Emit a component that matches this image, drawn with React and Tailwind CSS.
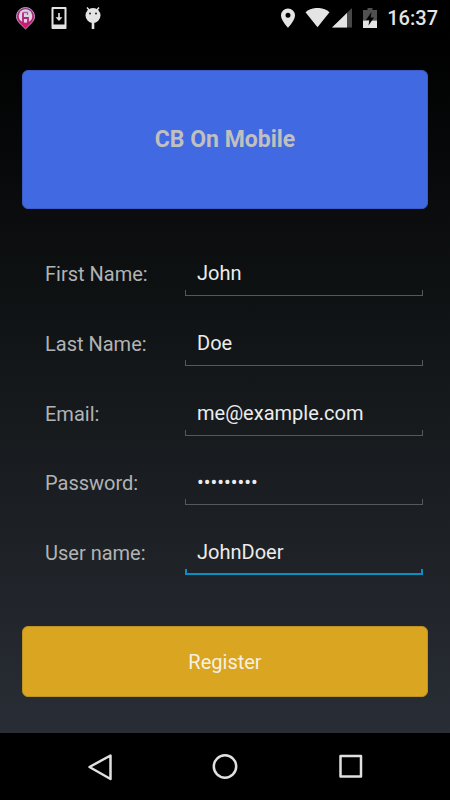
import { useState } from 'react';

const FIELDS = [
  { id: 'firstName', label: 'First Name:', type: 'text' },
  { id: 'lastName', label: 'Last Name:', type: 'text' },
  { id: 'email', label: 'Email:', type: 'email' },
  { id: 'password', label: 'Password:', type: 'password' },
  { id: 'userName', label: 'User name:', type: 'text' },
];

function StatusBar() {
  return (
    <header className="flex h-9 shrink-0 items-center justify-between bg-black pl-[15px] pr-3 text-[#e4e4e4]">
      <div className="flex items-center gap-[13px]">
        <svg className="h-6 w-[22px]" viewBox="0 0 22 24" aria-hidden="true">
          <defs>
            <linearGradient id="pin" x1="0" y1="0" x2="0" y2="1">
              <stop offset="0" stopColor="#93308f" />
              <stop offset="1" stopColor="#e0126e" />
            </linearGradient>
          </defs>
          <path d="M10.500 1.500a9 9 0 0 1 9 9c0 4.500-4.500 8-9 12.500-4.500-4.500-9-8-9-12.500a9 9 0 0 1 9-9Z" fill="url(#pin)" stroke="#b9a3b4" strokeWidth="1" />
          <circle cx="10.500" cy="10" r="6.800" fill="#ddd3dc" />
          <path d="M8 6.500V18M8 12h5v6.500" fill="none" stroke="#b0247f" strokeWidth="1.800" />
          <path d="M8 6.500h4.500V9" fill="none" stroke="#a9619f" strokeWidth="1.300" />
        </svg>
        <svg className="h-6 w-[18px]" viewBox="0 0 18 24" aria-hidden="true">
          <path fillRule="evenodd" d="M2.500 1h13a1 1 0 0 1 1 1v20a1 1 0 0 1-1 1h-13a1 1 0 0 1-1-1V2a1 1 0 0 1 1-1Zm1 2v15.500h11V3Z" fill="currentColor" />
          <path d="M8.200 7h1.600v4.300h2.700L9 15l-3.500-3.700h2.700Z" fill="currentColor" />
        </svg>
        <svg className="ml-[3px] h-6 w-[18px]" viewBox="0 0 18 24" aria-hidden="true">
          <path d="m3 1.500 3 3.500M15 1.500 12 5" stroke="currentColor" strokeWidth="1.500" />
          <circle cx="9" cy="9.500" r="7.500" fill="currentColor" />
          <path d="M9 15v8" stroke="currentColor" strokeWidth="2.600" />
          <circle cx="6" cy="7.500" r="1" fill="#222" />
          <circle cx="12" cy="7.500" r="1" fill="#222" />
        </svg>
      </div>

      <div className="flex items-center">
        <svg className="mr-[9px] h-5 w-4" viewBox="0 0 16 20" aria-hidden="true">
          <path fillRule="evenodd" d="M8 0.500a7 7 0 0 1 7 7C15 12.200 8 19.800 8 19.800S1 12.200 1 7.500a7 7 0 0 1 7-7Zm0 4.300a2.500 2.500 0 1 0 0 5 2.500 2.500 0 0 0 0-5Z" fill="currentColor" />
        </svg>
        <svg className="mr-[2px] h-5 w-[25px]" viewBox="0 0 25 20" aria-hidden="true">
          <path d="M0.500 4.200C7-1.500 18-1.500 24.500 4.200L12.500 19.300Z" fill="currentColor" />
        </svg>
        <svg className="mr-[11px] h-5 w-5" viewBox="0 0 20 20" aria-hidden="true">
          <path d="M20 0v19.500H0Z" fill="#474747" />
          <path d="M15 5v14.500H0Z" fill="currentColor" />
        </svg>
        <svg className="mr-[10px] h-5 w-[14px]" viewBox="0 0 14 20" aria-hidden="true">
          <path d="M4.500 0h5v2H14v10.500H0V2h4.500Z" fill="#505050" />
          <path d="M0 12.500h14V20H0Z" fill="currentColor" />
          <path d="M8.500 4 3 12h3.300l-.8 5.500L11 9.500H7.700Z" fill="#000" />
        </svg>
        <time className="text-xl font-medium leading-6">16:37</time>
      </div>
    </header>
  );
}

function Field({ field, value, active, onChange, onFocus }) {
  return (
    <div className="flex items-start">
      <label htmlFor={field.id} className="w-[140px] shrink-0 text-xl leading-9 text-[#b2b3b4]">
        {field.label}
      </label>
      <div className="min-w-0 flex-1">
        <input
          id={field.id}
          type={field.type}
          value={value}
          onChange={onChange}
          onFocus={onFocus}
          className="block h-[34px] w-full bg-transparent px-3 text-xl leading-6 text-[#ececec] outline-none"
        />
        <div className={active ? 'h-[6px] border-x-2 border-b-2 border-[#0b8fc2]' : 'h-[6px] border-x border-b border-[#56595b]'} />
      </div>
    </div>
  );
}

function NavBar() {
  return (
    <nav className="flex h-[67px] shrink-0 items-center justify-between bg-black px-[84px] text-[#e0e0e0]">
      <button type="button" aria-label="Back">
        <svg className="h-8 w-8" viewBox="0 0 32 32" fill="none" stroke="currentColor" strokeWidth="2.500" strokeLinejoin="round">
          <path d="M26.500 4.500v23.500L5.500 16Z" />
        </svg>
      </button>
      <button type="button" aria-label="Home">
        <svg className="h-8 w-8" viewBox="0 0 32 32" fill="none" stroke="currentColor" strokeWidth="2.500">
          <circle cx="16" cy="15.500" r="11.200" />
        </svg>
      </button>
      <button type="button" aria-label="Recent apps">
        <svg className="h-8 w-8" viewBox="0 0 32 32" fill="none" stroke="currentColor" strokeWidth="2.500" strokeLinejoin="round">
          <rect x="6.500" y="5" width="20.500" height="20.500" />
        </svg>
      </button>
    </nav>
  );
}

export default function App() {
  const [active, setActive] = useState('userName');
  const [values, setValues] = useState({
    firstName: 'John',
    lastName: 'Doe',
    email: 'me@example.com',
    password: 'secret123',
    userName: 'JohnDoer',
  });

  const update = (id) => (e) => setValues({ ...values, [id]: e.target.value });

  return (
    <div className="flex min-h-screen flex-col bg-black font-['Roboto',sans-serif]">
      <StatusBar />

      <main className="flex flex-1 flex-col bg-linear-to-b/srgb from-black via-[#14181a] to-[#292d35] px-[22px] pb-9 pt-[34px]">
        <div className="flex h-[139px] items-center justify-center rounded-md border border-[#3a5bc9] bg-[#4169e1]">
          <h1 className="text-[23px] font-bold leading-7 text-[#c0c0c0]">CB On Mobile</h1>
        </div>

        <form className="flex flex-1 flex-col" onSubmit={(e) => e.preventDefault()}>
          <div className="flex flex-1 flex-col justify-between pb-[51px] pl-[23px] pr-[5px] pt-[47px]">
            {FIELDS.map((f) => (
              <Field
                key={f.id}
                field={f}
                value={values[f.id]}
                active={active === f.id}
                onChange={update(f.id)}
                onFocus={() => setActive(f.id)}
              />
            ))}
          </div>

          <button type="submit" className="h-[71px] rounded-md border border-[#bd9122] bg-[#daa520] text-xl leading-6 text-[#f5f0e6]">
            Register
          </button>
        </form>
      </main>

      <NavBar />
    </div>
  );
}
